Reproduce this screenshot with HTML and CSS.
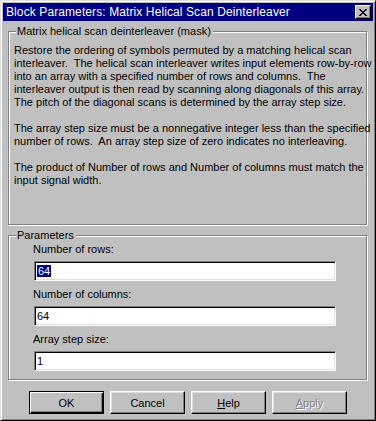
FILE: index.html
```html
<!DOCTYPE html>
<html lang="en">
<head>
  <meta charset="UTF-8" />
  <title>Block Parameters: Matrix Helical Scan Deinterleaver</title>
  <link rel="stylesheet" href="styles.css">
</head>
<body>

  <div class="window">
    <!-- Title bar -->
    <div class="titlebar">
      <span class="title">Block Parameters: Matrix Helical Scan Deinterleaver</span>
      <button class="close" title="Close">
        <svg width="8" height="7" viewBox="0 0 8 7" shape-rendering="crispEdges">
          <path d="M0 0h2v1h-2zM6 0h2v1h-2zM1 1h2v1h-2zM5 1h2v1h-2zM2 2h4v1h-4zM3 3h2v1h-2zM2 4h4v1h-4zM1 5h2v1h-2zM5 5h2v1h-2zM0 6h2v1h-2zM6 6h2v1h-2z" fill="#000"/>
        </svg>
      </button>
    </div>

    <div class="content">
      <!-- Mask description -->
      <div class="group group-desc">
        <span class="legend">Matrix helical scan deinterleaver (mask)</span>
        <p>Restore the ordering of symbols permuted by a matching helical scan<br>
          interleaver.&nbsp; The helical scan interleaver writes input elements row-by-row<br>
          into an array with a specified number of rows and columns.&nbsp; The<br>
          interleaver output is then read by scanning along diagonals of this array.<br>
          The pitch of the diagonal scans is determined by the array step size.</p>
        <p>The array step size must be a nonnegative integer less than the specified<br>
          number of rows.&nbsp; An array step size of zero indicates no interleaving.</p>
        <p>The product of Number of rows and Number of columns must match the<br>
          input signal width.</p>
      </div>

      <!-- Parameters -->
      <div class="group group-params">
        <span class="legend">Parameters</span>
        <div class="field">
          <label>Number of rows:</label>
          <div class="edit"><span class="selected">64</span></div>
        </div>
        <div class="field">
          <label>Number of columns:</label>
          <div class="edit">64</div>
        </div>
        <div class="field">
          <label>Array step size:</label>
          <div class="edit">1</div>
        </div>
      </div>

      <!-- Buttons -->
      <div class="buttons">
        <button class="btn default">OK</button>
        <button class="btn">Cancel</button>
        <button class="btn"><u>H</u>elp</button>
        <button class="btn disabled"><u>A</u>pply</button>
      </div>
    </div>
  </div>

</body>
</html>
```

FILE: styles.css
```css
body {
  margin: 0;
  background-color: #c0c0c0;
  font-family: "Liberation Sans", Arial, sans-serif;
  font-size: 11px;
  line-height: 13px;
  color: #000;
}

.window {
  width: 376px;
  height: 421px;
  box-sizing: border-box;
  border: 1px solid;
  border-color: #dfdfdf #000 #000 #dfdfdf;
  box-shadow: inset 1px 1px 0 #fff, inset -1px -1px 0 #808080;
  padding: 2px;
  background-color: #c0c0c0;
}

.titlebar {
  height: 18px;
  background-color: #000080;
  color: #fff;
  display: flex;
  align-items: center;
  justify-content: space-between;
  padding: 0 2px 0 3px;
}

.title {
  white-space: nowrap;
  font-size: 12px;
  letter-spacing: 0.1px;
}

.close {
  width: 16px;
  height: 14px;
  padding: 0;
  background-color: #c0c0c0;
  border: 1px solid;
  border-color: #fff #000 #000 #fff;
  box-shadow: inset -1px -1px 0 #808080;
  display: flex;
  align-items: center;
  justify-content: center;
}

.content {
  padding: 10px 5px 0 5px;
}

.group {
  position: relative;
  border: 1px solid #808080;
  box-shadow: 1px 1px 0 #fff, inset 1px 1px 0 #fff;
  margin-right: 1px;
}

.legend {
  position: absolute;
  top: -7px;
  left: 7px;
  padding: 0 2px 0 1px;
  background-color: #c0c0c0;
  white-space: nowrap;
}

.group-desc {
  box-sizing: content-box;
  padding: 12px 5px 0 5px;
  height: 180px;
}

.group-desc p {
  margin: 0 0 13px 0;
  white-space: nowrap;
}

.group-params {
  margin-top: 10px;
  height: 145px;
  padding: 7px 30px 0 24px;
  box-sizing: border-box;
  display: flex;
  flex-direction: column;
  gap: 7px;
}

.field label {
  display: block;
  margin-bottom: 5px;
}

.edit {
  margin-left: 1px;
  height: 20px;
  box-sizing: border-box;
  background-color: #fff;
  border: 1px solid;
  border-color: #808080 #fff #fff #808080;
  box-shadow: inset 1px 1px 0 #000, inset -1px -1px 0 #dfdfdf;
  padding: 3px 3px 0 2px;
  line-height: 13px;
}

.selected {
  background-color: #000080;
  color: #fff;
  padding: 0 1px;
}

.buttons {
  display: flex;
  justify-content: center;
  gap: 6px;
  margin-top: 11px;
}

.btn {
  width: 75px;
  height: 23px;
  padding: 0;
  font-family: inherit;
  font-size: 11px;
  color: #000;
  background-color: #c0c0c0;
  border: 1px solid;
  border-color: #fff #000 #000 #fff;
  box-shadow: inset -1px -1px 0 #808080, inset 1px 1px 0 #dfdfdf;
}

.btn.default {
  border: 1px solid #000;
  box-shadow: inset 1px 1px 0 #fff, inset -1px -1px 0 #000, inset -2px -2px 0 #808080;
}

.btn.disabled {
  color: #808080;
  text-shadow: 1px 1px 0 #fff;
}
```
